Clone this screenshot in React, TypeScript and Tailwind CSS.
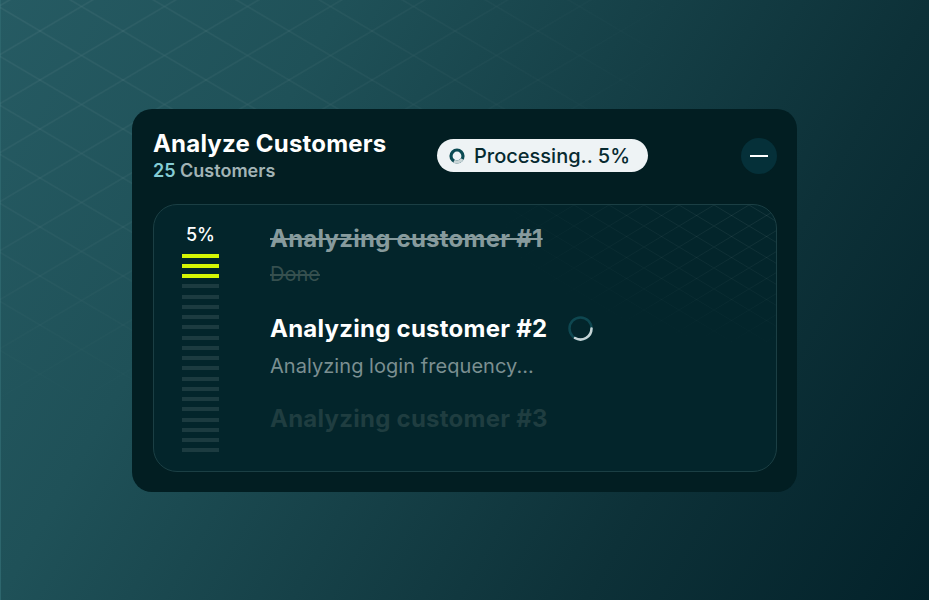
import React from "react";

function PillSpinner() {
  return (
    <svg width="16" height="16" viewBox="0 0 16 16" className="shrink-0">
      <circle cx="8" cy="8" r="6" fill="none" stroke="#0b4a53" strokeWidth="3.2" />
      <path d="M13.2 11 A6 6 0 0 1 5 13.2" fill="none" stroke="#c9d5d7" strokeWidth="3.2" />
    </svg>
  );
}

function ItemSpinner() {
  return (
    <svg width="25" height="25" viewBox="0 0 25 25" className="shrink-0">
      <circle cx="12.5" cy="12.5" r="11" fill="none" stroke="#0e4750" strokeWidth="2.5" />
      <path d="M23.5 12.5 A11 11 0 0 1 7 22.03" fill="none" stroke="#c5d3d5" strokeWidth="2.5" strokeLinecap="round" />
    </svg>
  );
}

export default function App() {
  const bars = Array.from({ length: 20 }, (_, i) => i < 3);
  return (
    <div className="relative flex h-[600px] w-full items-center justify-center overflow-hidden bg-[linear-gradient(120deg,#265b63_0%,#1f5158_27%,#0d3138_73%,#03222a_100%)] shadow-[inset_1px_0_0_#2d666d] font-['Inter',sans-serif]">
      <svg className="pointer-events-none absolute inset-0" width="929" height="600">
        <defs>
          <pattern id="bgGrid" width="83" height="49" patternUnits="userSpaceOnUse" x="-1.5" y="6.5">
            <path d="M0 0L83 49M0 49L83 0" stroke="rgba(255,255,255,0.10)" strokeWidth="1" fill="none" />
          </pattern>
          <radialGradient id="bgFade" cx="0" cy="0" r="1" gradientUnits="userSpaceOnUse" gradientTransform="scale(720 430)">
            <stop offset="0" stopColor="#fff" stopOpacity="1" />
            <stop offset="0.5" stopColor="#fff" stopOpacity="0.7" />
            <stop offset="1" stopColor="#fff" stopOpacity="0" />
          </radialGradient>
          <mask id="bgMask">
            <rect width="929" height="600" fill="url(#bgFade)" />
          </mask>
        </defs>
        <rect width="929" height="600" fill="url(#bgGrid)" mask="url(#bgMask)" />
      </svg>

      <div className="relative flex h-[383px] w-[665px] flex-col rounded-[20px] bg-[#021e22] pl-[21px] pr-5 pt-[21px] pb-5">
        <div className="flex items-center">
          <div className="w-[284px]">
            <div className="text-[24px] font-bold leading-[28px] tracking-[0.2px] text-white">Analyze Customers</div>
            <div className="mt-[2px] text-[18px] font-semibold leading-[22px] text-[#a2b4b6]">
              <span className="text-[#85cdd5]">25</span> Customers
            </div>
          </div>
          <div className="flex h-[33px] items-center gap-[9px] rounded-full bg-[#eef3f5] pl-3 pr-[18px]">
            <PillSpinner />
            <span className="text-[20px] font-medium leading-none text-[#072a30]">Processing.. 5%</span>
          </div>
          <button className="ml-auto flex h-9 w-9 items-center justify-center rounded-full bg-[#053039]">
            <span className="block h-[2px] w-[18px] bg-white" />
          </button>
        </div>

        <div className="relative mt-[22px] flex flex-1 overflow-hidden rounded-[24px] border border-[#1b3f44] bg-[#03252b] pl-[28px]">
          <svg className="pointer-events-none absolute inset-0" width="100%" height="100%">
            <defs>
              <pattern id="inGrid" width="35" height="21" patternUnits="userSpaceOnUse" x="0" y="0">
                <path d="M0 0L35 21M0 21L35 0" stroke="rgba(255,255,255,0.08)" strokeWidth="1" fill="none" />
              </pattern>
              <radialGradient id="inFade" cx="0" cy="0" r="1" gradientUnits="userSpaceOnUse" gradientTransform="translate(624 0) scale(300 150)">
                <stop offset="0" stopColor="#fff" stopOpacity="1" />
                <stop offset="1" stopColor="#fff" stopOpacity="0" />
              </radialGradient>
              <mask id="inMask">
                <rect width="100%" height="100%" fill="url(#inFade)" />
              </mask>
            </defs>
            <rect width="100%" height="100%" fill="url(#inGrid)" mask="url(#inMask)" />
          </svg>

          <div className="relative flex w-[37px] flex-col items-center pt-[18px]">
            <div className="text-[18px] font-medium leading-[24px] text-white">5%</div>
            <div className="mt-[7px] flex w-full flex-col gap-[6.26px]">
              {bars.map((on, i) => (
                <div key={i} className={on ? "h-[4px] w-full bg-[#d5f604]" : "h-[4px] w-full bg-[#1c3b40]"} />
              ))}
            </div>
          </div>

          <div className="relative ml-[51px] flex flex-col pt-[18px]">
            <div>
              <div className="text-[24px] font-bold leading-[32px] tracking-[0.25px] text-[#879b9d] line-through">Analyzing customer #1</div>
              <div className="mt-[5.5px] text-[20px] leading-[28px] text-[#36504f] line-through">Done</div>
            </div>
            <div className="mt-[24.5px]">
              <div className="flex items-center gap-[21px]">
                <div className="text-[24px] font-bold leading-[32px] tracking-[0.25px] text-white">Analyzing customer #2</div>
                <ItemSpinner />
              </div>
              <div className="mt-[7px] text-[20px] leading-[28px] tracking-[0.05px] text-[#7b8f91]">Analyzing login frequency...</div>
            </div>
            <div className="mt-[23px]">
              <div className="text-[24px] font-bold leading-[32px] tracking-[0.25px] text-[#1f3d40]">Analyzing customer #3</div>
            </div>
          </div>
        </div>
      </div>
    </div>
  );
}
